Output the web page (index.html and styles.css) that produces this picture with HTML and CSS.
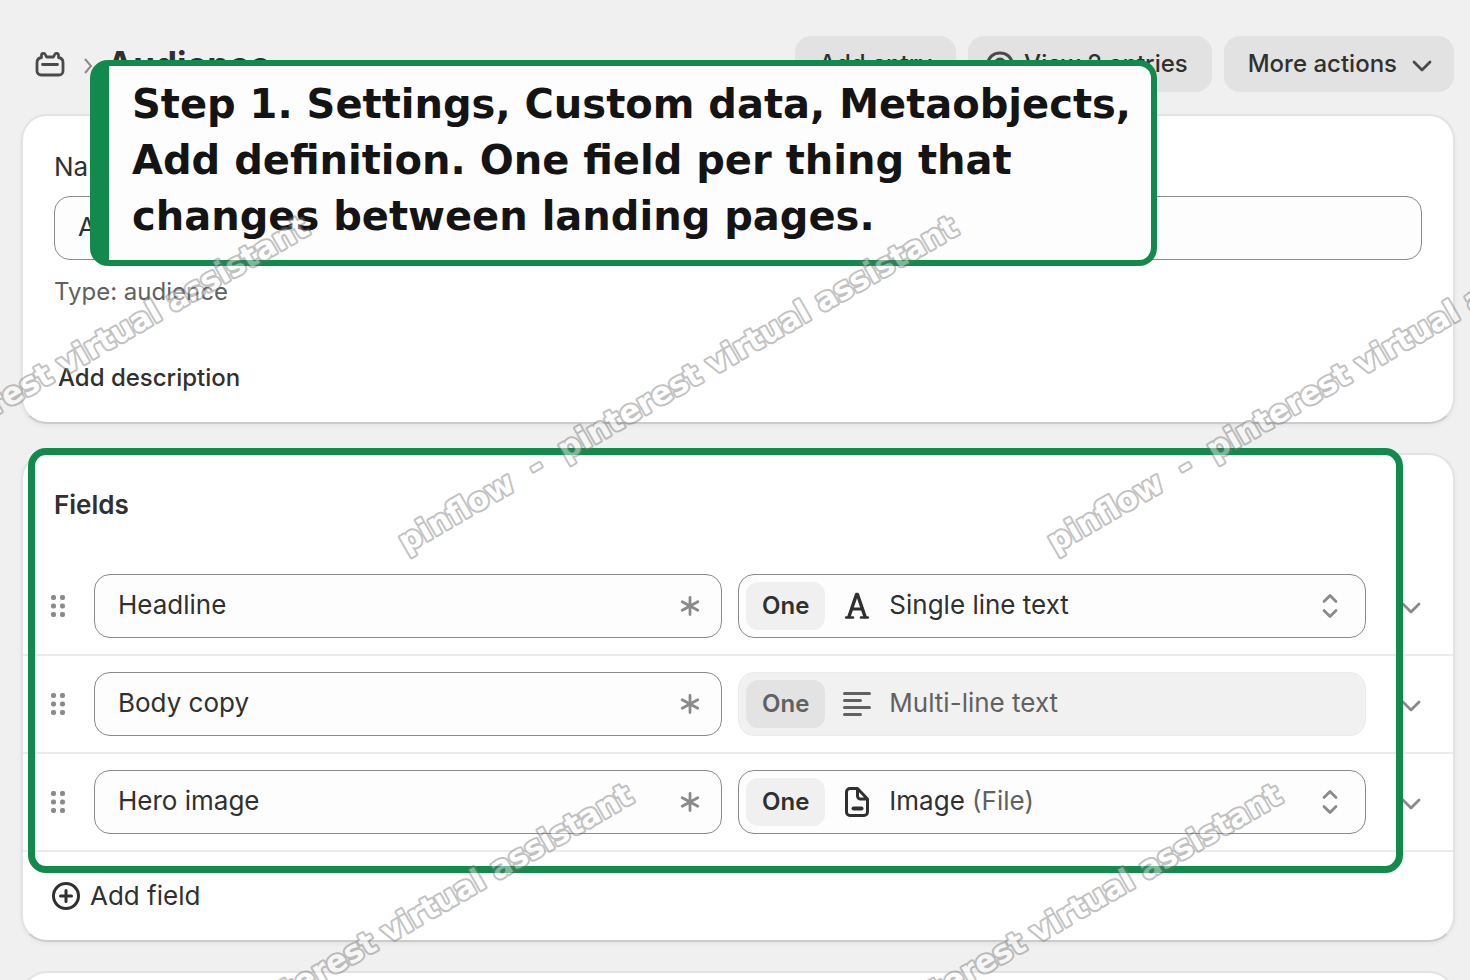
FILE: index.html
```html
<!DOCTYPE html>
<html lang="en">
<head>
<meta charset="utf-8">
<title>Audience</title>
<link rel="stylesheet" href="styles.css">
</head>
<body>
<svg class="defs" aria-hidden="true">
  <symbol id="grip" viewBox="0 0 16 24"><g fill="#8a8a8a"><rect x="1" y="1" width="5" height="5" rx="2"/><rect x="10" y="1" width="5" height="5" rx="2"/><rect x="1" y="9.500" width="5" height="5" rx="2"/><rect x="10" y="9.500" width="5" height="5" rx="2"/><rect x="1" y="18" width="5" height="5" rx="2"/><rect x="10" y="18" width="5" height="5" rx="2"/></g></symbol>
  <symbol id="star" viewBox="0 0 20 20"><path d="M10 1.500v17M2.200 5.800l15.600 8.400M2.200 14.200l15.600-8.400" fill="none" stroke="#8a8a8a" stroke-width="2.800" stroke-linecap="round"/></symbol>
  <symbol id="updown" viewBox="0 0 20 28"><path d="M4 9.500l6-6 6 6M4 18.500l6 6 6-6" fill="none" stroke="#8a8a8a" stroke-width="2.800" stroke-linecap="round" stroke-linejoin="round"/></symbol>
  <symbol id="down" viewBox="0 0 20 14"><path d="M2 3l8 8 8-8" fill="none" stroke="currentColor" stroke-width="2.800" stroke-linecap="round" stroke-linejoin="round"/></symbol>
</svg>

<div class="page">
  <header class="header">
    <a class="crumb" href="#" aria-label="Metaobjects">
      <svg width="30" height="26" viewBox="0 0 30 26" fill="none" stroke="#4a4a4a" stroke-width="2.800" stroke-linecap="round" stroke-linejoin="round"><path d="M6.500 6.500V4.500a2 2 0 0 1 3.800-1L11.500 6h7l1.200-2.500a2 2 0 0 1 3.800 1v2C26.500 7 28 9 28 11.500V20a4 4 0 0 1-4 4H6a4 4 0 0 1-4-4v-8.500C2 9 3.500 7 6.500 6.500zM7.500 13.500h15"/></svg>
    </a>
    <svg class="sep" width="10" height="16" viewBox="0 0 10 16" fill="none" stroke="#8a8a8a" stroke-width="2"><path d="M2 1l6 7-6 7"/></svg>
    <h1 class="title">Audience</h1>
    <button class="btn" type="button">Add entry</button>
    <button class="btn view" type="button"><svg width="32" height="28" viewBox="0 0 32 28" fill="none" stroke="#4a4a4a" stroke-width="3"><path d="M3 14C5 7 10 3 16 3s11 4 13 11c-2 7-7 11-13 11S5 21 3 14z"/><circle cx="16" cy="14" r="5"/></svg>View 2 entries</button>
    <button class="btn" type="button">More actions<svg class="caret" width="20" height="14"><use href="#down"/></svg></button>
  </header>

  <section class="card details">
    <label class="label" for="name">Name</label>
    <input class="box name" id="name" type="text" value="Audience">
    <p class="type">Type: audience</p>
    <button class="link" type="button">Add description</button>
  </section>

  <section class="card fields">
    <h2 class="heading">Fields</h2>
    <ul class="rows">
      <li class="row">
        <svg class="grip" width="16" height="24"><use href="#grip"/></svg>
        <div class="cell">
          <input class="box" type="text" value="Headline" aria-label="Field name">
          <svg class="star" width="20" height="20"><use href="#star"/></svg>
        </div>
        <button class="box picker" type="button">
          <span class="one">One</span>
          <svg class="kind" width="28" height="32" viewBox="0 0 28 32" fill="none" stroke="#303030" stroke-linecap="round" stroke-linejoin="round"><path d="M6 26.500L13.500 4.500h1L22 26.500" stroke-width="3.400"/><path d="M8.500 19h11" stroke-width="3"/><path d="M3.200 27.500h6.800M18 27.500h6.800" stroke-width="2.600"/></svg>
          <span class="what">Single line text</span>
          <svg class="updown" width="20" height="28"><use href="#updown"/></svg>
        </button>
        <button class="expand" type="button" aria-label="Expand"><svg width="20" height="14"><use href="#down"/></svg></button>
      </li>
      <li class="row">
        <svg class="grip" width="16" height="24"><use href="#grip"/></svg>
        <div class="cell">
          <input class="box" type="text" value="Body copy" aria-label="Field name">
          <svg class="star" width="20" height="20"><use href="#star"/></svg>
        </div>
        <button class="box picker" type="button" disabled>
          <span class="one">One</span>
          <svg class="kind" width="28" height="32" viewBox="0 0 28 32" fill="none" stroke="#616161" stroke-width="3" stroke-linecap="round"><path d="M1.500 5.500h25M1.500 12.500h16M1.500 19.500h25M1.500 26.500h16"/></svg>
          <span class="what">Multi-line text</span>
        </button>
        <button class="expand" type="button" aria-label="Expand"><svg width="20" height="14"><use href="#down"/></svg></button>
      </li>
      <li class="row">
        <svg class="grip" width="16" height="24"><use href="#grip"/></svg>
        <div class="cell">
          <input class="box" type="text" value="Hero image" aria-label="Field name">
          <svg class="star" width="20" height="20"><use href="#star"/></svg>
        </div>
        <button class="box picker" type="button">
          <span class="one">One</span>
          <svg class="kind" width="28" height="32" viewBox="0 0 28 32" fill="none" stroke="#303030" stroke-width="3" stroke-linecap="round" stroke-linejoin="round"><path d="M14.500 2.500H7A3.500 3.500 0 0 0 3.500 6v20A3.500 3.500 0 0 0 7 29.500h14a3.500 3.500 0 0 0 3.500-3.500V13zM14.500 2.500V10a3 3 0 0 0 3 3h7"/><path d="M10.500 22.500h8" stroke-width="4"/></svg>
          <span class="what">Image <span class="muted">(File)</span></span>
          <svg class="updown" width="20" height="28"><use href="#updown"/></svg>
        </button>
        <button class="expand" type="button" aria-label="Expand"><svg width="20" height="14"><use href="#down"/></svg></button>
      </li>
    </ul>
    <button class="add" type="button"><svg width="28" height="28" viewBox="0 0 28 28" fill="none" stroke="#303030" stroke-width="3" stroke-linecap="round"><circle cx="14" cy="14" r="12.500"/><path d="M14 8.500v11M8.500 14h11"/></svg>Add field</button>
    <div class="highlight"></div>
  </section>

  <section class="card next"></section>

  <p class="callout">Step 1. Settings, Custom data, Metaobjects, Add definition. One field per thing that changes between landing pages.</p>

  <svg class="watermark" aria-hidden="true">
    <text transform="translate(-243 553) rotate(-30)">pinflow  -  pinterest virtual assistant</text>
    <text transform="translate(406 553) rotate(-30)">pinflow  -  pinterest virtual assistant</text>
    <text transform="translate(1055 553) rotate(-30)">pinflow  -  pinterest virtual assistant</text>
    <text transform="translate(81 1121) rotate(-30)">pinflow  -  pinterest virtual assistant</text>
    <text transform="translate(730 1121) rotate(-30)">pinflow  -  pinterest virtual assistant</text>
  </svg>
</div>
</body>
</html>
```
FILE: styles.css
```css
* { box-sizing: border-box; }

body {
  margin: 0;
  background: #f0f0f0;
  color: #303030;
  font: 400 26px/32px Inter, sans-serif;
}

button, input {
  font: inherit;
  color: inherit;
  margin: 0;
}

button {
  border: 0;
  background: none;
  padding: 0;
  text-align: left;
}

.defs { display: none; }

.page {
  position: relative;
  height: 100vh;
  overflow: hidden;
  padding: 36px 15px 0 21px;
}

.header {
  display: flex;
  align-items: center;
  gap: 12px;
  height: 56px;
  margin: 0 1px 22px 0;
}

.crumb {
  display: flex;
  margin-left: 14px;
}

.sep { margin: 4px 0 0 6px; }

.title {
  flex: 1;
  margin: 0 0 0 2px;
  font-size: 35px;
  line-height: 40px;
  font-weight: 650;
}

.btn {
  display: flex;
  align-items: center;
  gap: 8px;
  height: 56px;
  padding: 0 24px;
  border-radius: 16px;
  background: #e2e2e2;
  font-size: 24px;
  font-weight: 500;
}

.view { padding-left: 16px; }

.btn .caret {
  color: #4a4a4a;
  margin: 4px -2px 0 7px;
}

.card {
  position: relative;
  background: #fff;
  border: 2px solid #e3e3e3;
  border-bottom-color: #cccccc;
  border-radius: 26px;
  box-shadow: 0 2px 4px rgba(0, 0, 0, 0.05);
  margin-bottom: 29px;
}

.details {
  display: flex;
  flex-direction: column;
  align-items: flex-start;
  padding: 35px 31px 28px;
}

.label { margin-bottom: 13px; }

.box {
  width: 100%;
  height: 64px;
  border: 1px solid #8a8a8a;
  border-radius: 16px;
  background: #fdfdfd;
  padding: 0 23px 4px;
}

.type {
  margin: 16px 0 54px;
  font-size: 24px;
  color: #616161;
}

.link {
  padding-left: 4px;
  font-size: 24px;
  font-weight: 500;
}

.fields { padding-top: 34px; }

.heading {
  margin: 0 0 37px 31px;
  font-size: 26px;
  line-height: 32px;
  font-weight: 600;
}

.rows {
  list-style: none;
  margin: 0;
  padding: 0;
}

.row {
  display: grid;
  grid-template-columns: 44px 1fr 16px 1fr 35px 20px;
  align-items: center;
  padding: 16px 32px 16px 27px;
  border-bottom: 2px solid #ebebeb;
}

.cell {
  position: relative;
  grid-column: 2;
}

.cell .box { display: block; }

.star {
  position: absolute;
  right: 22px;
  top: 22px;
}

.picker {
  grid-column: 4;
  display: flex;
  align-items: center;
  padding: 0 25px 0 7px;
}

.picker:disabled {
  background: #f1f1f1;
  border-color: #ebebeb;
  color: #616161;
}

.one {
  padding: 8px 16px;
  border-radius: 12px;
  background: #f0f0f0;
  font-size: 24px;
  font-weight: 600;
}

.picker:disabled .one { background: #e3e3e3; }

.kind { margin: 0 18px; }

.what {
  flex: 1;
  padding-bottom: 2px;
}

.muted { color: #616161; }

.expand {
  grid-column: 6;
  display: flex;
  margin-top: 4px;
  color: #8a8a8a;
}

.add {
  display: flex;
  align-items: center;
  gap: 10px;
  margin: 28px 0 28px 29px;
}

.highlight {
  position: absolute;
  inset: -7px 50px 67px 5px;
  border: 7px solid #128a4d;
  border-radius: 18px;
}

.next { height: 200px; }

.callout {
  position: absolute;
  left: 90px;
  right: 313px;
  top: 60px;
  margin: 0;
  padding: 10px 16px 16px 23px;
  border: 6px solid #128a4d;
  border-left-width: 19px;
  border-radius: 18px;
  background: #fdfdfd;
  color: #141414;
  font: 700 40px/56px "DejaVu Sans", sans-serif;
}

.watermark {
  position: absolute;
  inset: 0;
  width: 100%;
  height: 100%;
  pointer-events: none;
}

.watermark text {
  font: 700 31px "DejaVu Sans", sans-serif;
  white-space: pre;
  paint-order: stroke;
  fill: #fff;
  stroke: #707070;
  stroke-width: 4px;
  stroke-linejoin: round;
  opacity: 0.42;
}
```
